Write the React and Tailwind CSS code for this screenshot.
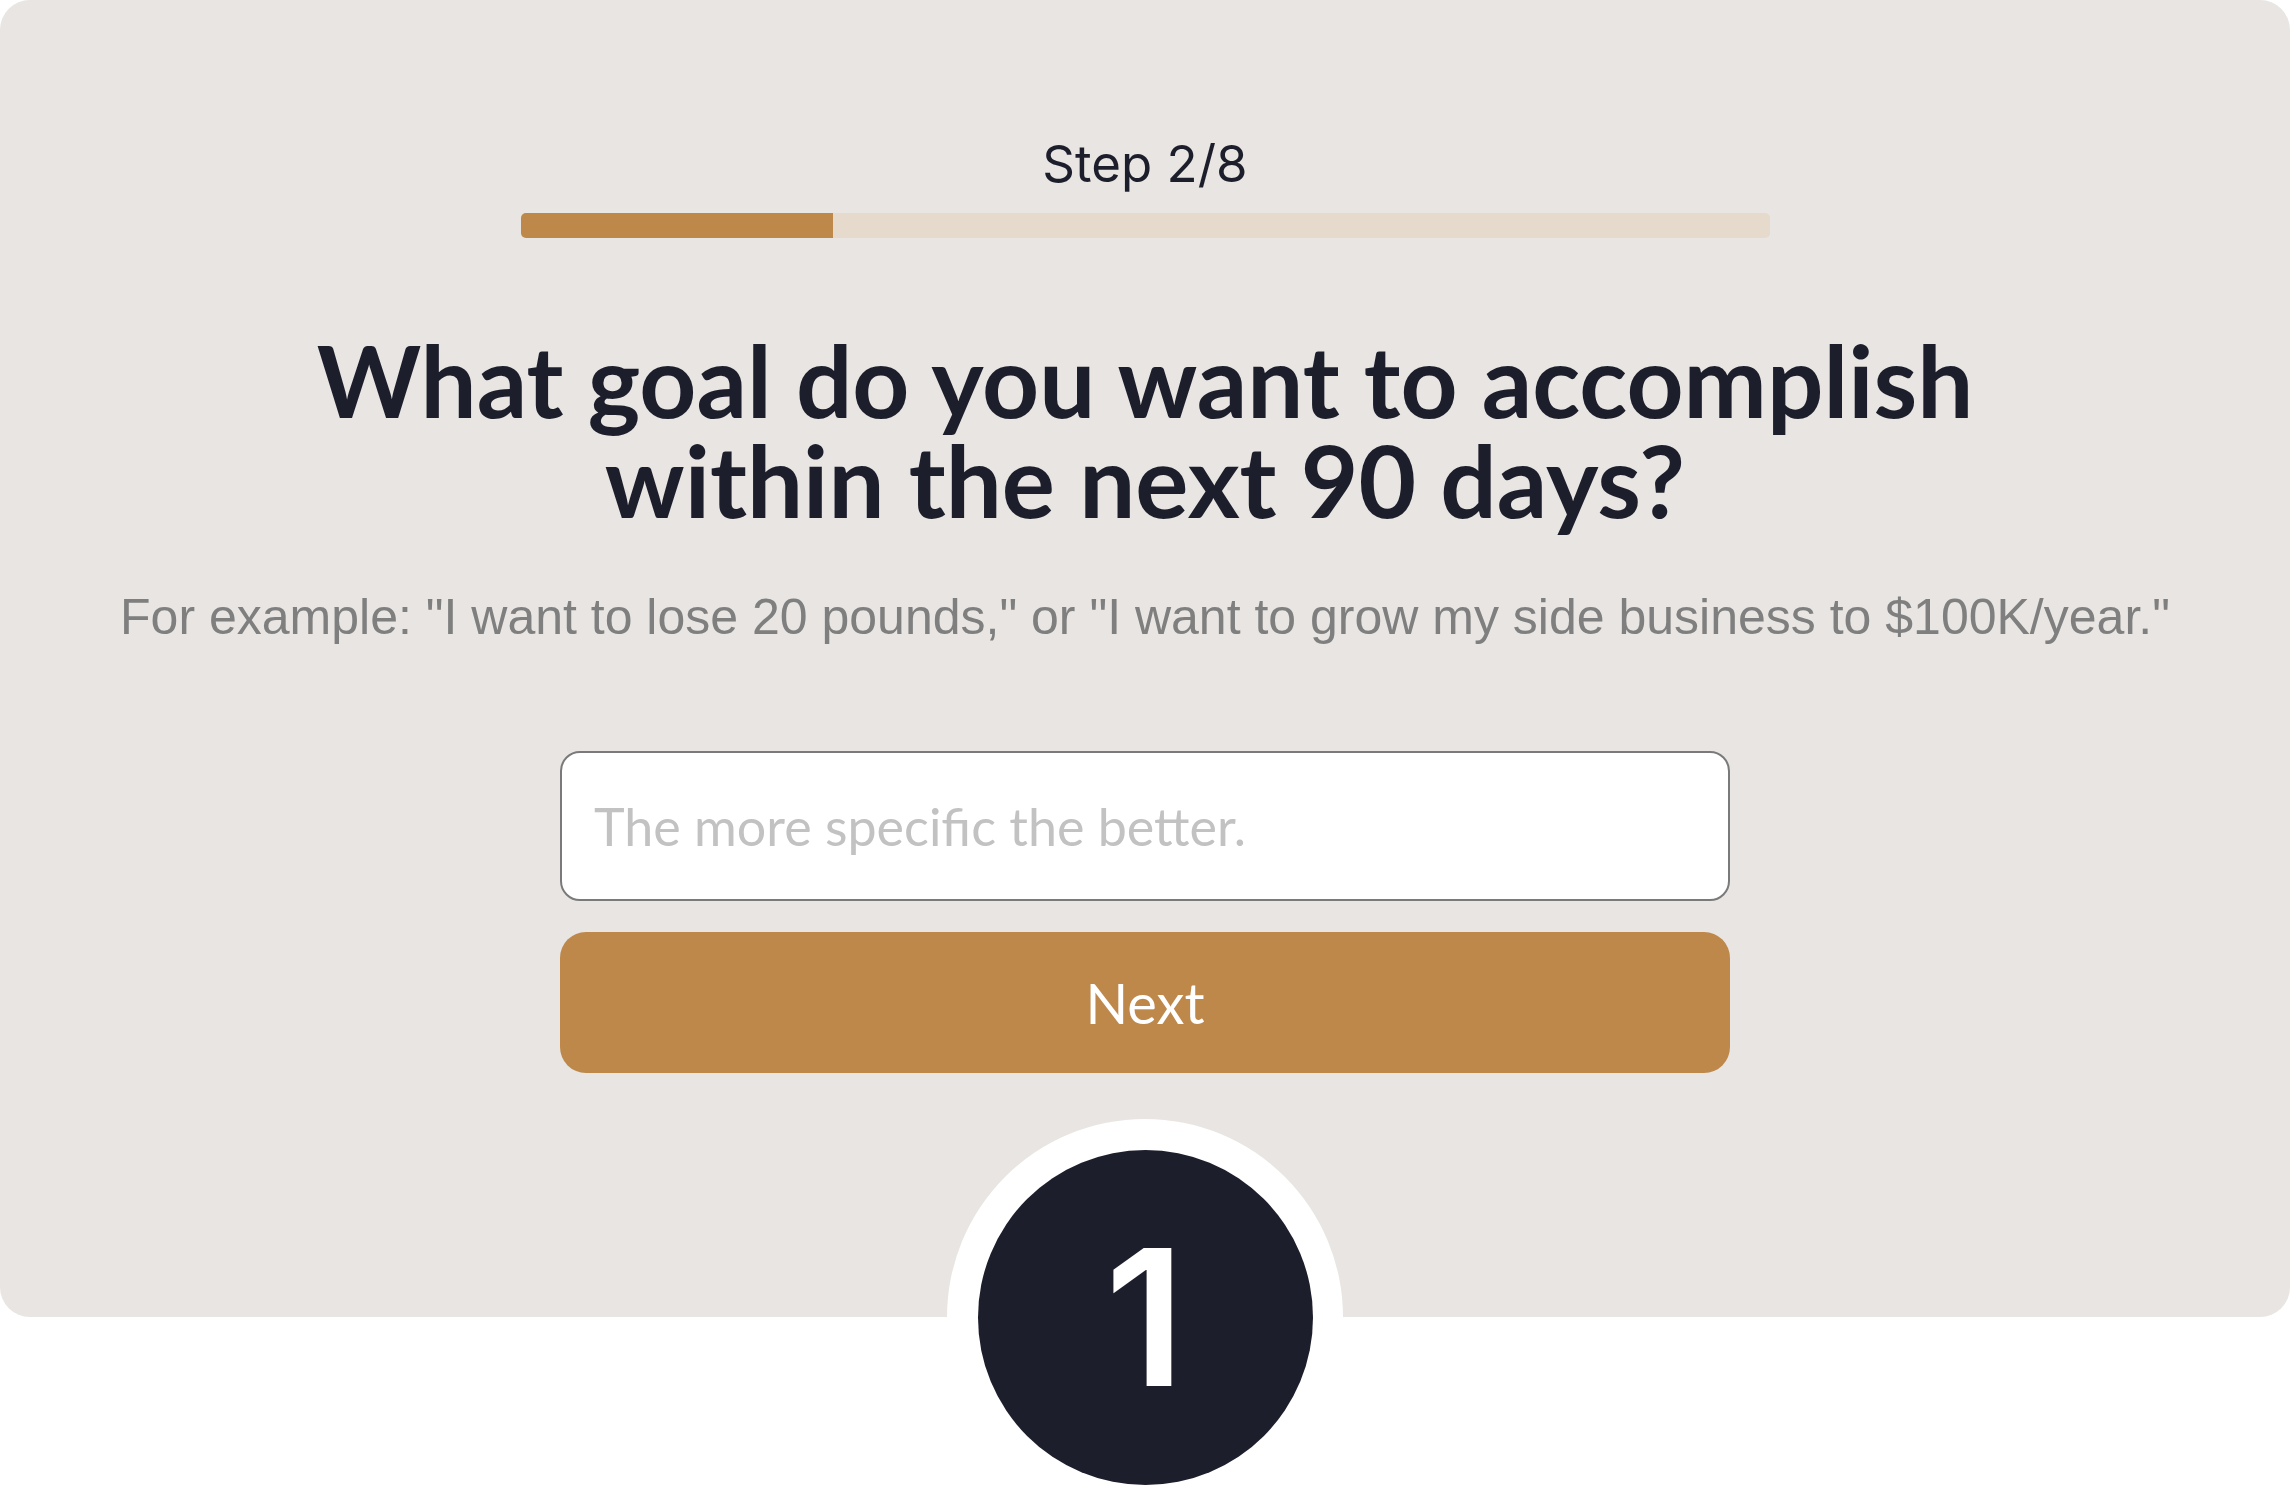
const STEP = 2;
const TOTAL = 8;

const App = () => {
  const pct = (STEP / TOTAL) * 100;

  return (
    <div className="min-h-[1485px] bg-white overflow-hidden">
      <div className="relative h-[1317px] w-full rounded-[30px] bg-[#e8e5e2]">
        <div className="flex flex-col items-center pt-[134px]">
          <p className="font-['Inter','Open_Sans',sans-serif] text-[51px] leading-[60px] text-[#1c1e2b]">
            Step {STEP}/{TOTAL}
          </p>

          <div className="mt-[19px] h-[25px] w-[1249px] rounded-[5px] bg-[#e5dacb] overflow-hidden">
            <div className="h-full bg-[#bd884a]" style={{ width: `${pct}%` }} />
          </div>

          <h1 className="mt-[92px] text-center font-['Lato','Open_Sans',sans-serif] text-[99.5px] leading-[100px] font-bold text-[#1c1e2b]">
            What goal do you want to accomplish
            <br />
            within the next 90 days?
          </h1>

          <p className="mt-[57px] text-center font-['Liberation_Sans',Arial,sans-serif] text-[50px] leading-[60px] text-[#7f7f7f]">
            For example: "I want to lose 20 pounds," or "I want to grow my side business to $100K/year."
          </p>

          <input
            type="text"
            placeholder="The more specific the better."
            className="mt-[104px] h-[150px] w-[1170px] rounded-[20px] border-2 border-[#7a7a7a] bg-white pl-8 font-['Lato','Open_Sans',sans-serif] text-[52px] text-[#1c1e2b] placeholder:text-[#c2c2c2] outline-none"
          />

          <button className="mt-[31px] h-[141px] w-[1170px] rounded-[26px] bg-[#bd884a] font-['Lato','Open_Sans',sans-serif] text-[56px] text-white">
            Next
          </button>
        </div>

        {/* step badge sitting on the bottom edge */}
        <div className="absolute left-1/2 bottom-0 translate-y-1/2 -translate-x-1/2 flex h-[396px] w-[396px] items-center justify-center rounded-full bg-white">
          <div className="flex h-[335px] w-[335px] items-center justify-center rounded-full bg-[#1c1e2b]">
            <span className="font-['Inter','Liberation_Sans',sans-serif] text-[190px] leading-none font-semibold text-white">
              1
            </span>
          </div>
        </div>
      </div>
    </div>
  );
};

export default App;
